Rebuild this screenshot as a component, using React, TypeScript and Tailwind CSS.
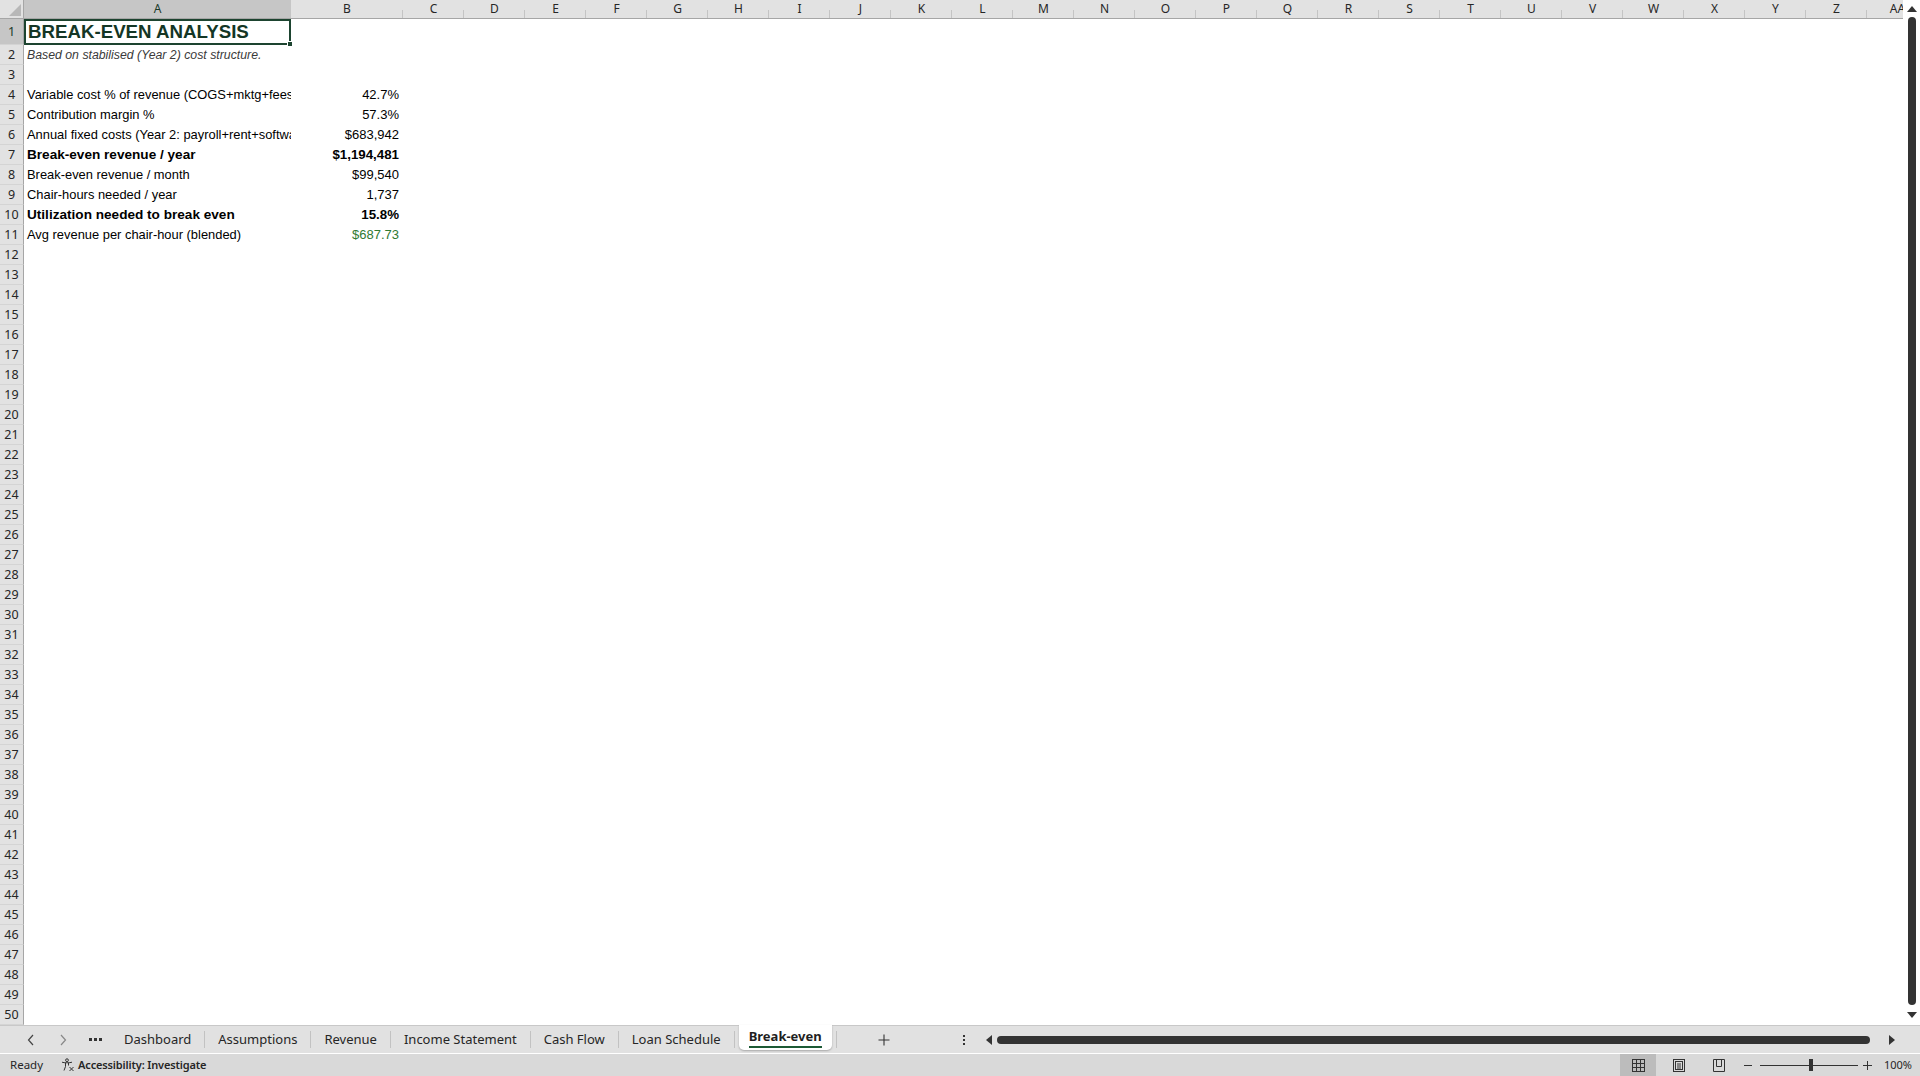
import React from "react";

// Sheet rows shown in the grid (column A label, column B value)
interface SheetRow {
  label: string;
  value?: string;
  bold?: boolean;
  green?: boolean;
}

const rows: Record<number, SheetRow> = {
  4: { label: "Variable cost % of revenue (COGS+mktg+fees)", value: "42.7%" },
  5: { label: "Contribution margin %", value: "57.3%" },
  6: { label: "Annual fixed costs (Year 2: payroll+rent+software)", value: "$683,942" },
  7: { label: "Break-even revenue / year", value: "$1,194,481", bold: true },
  8: { label: "Break-even revenue / month", value: "$99,540" },
  9: { label: "Chair-hours needed / year", value: "1,737" },
  10: { label: "Utilization needed to break even", value: "15.8%", bold: true },
  11: { label: "Avg revenue per chair-hour (blended)", value: "$687.73", green: true },
};

const extraCols = "CDEFGHIJKLMNOPQRSTUVWXYZ".split("").concat(["AA"]);
const tabs = ["Dashboard", "Assumptions", "Revenue", "Income Statement", "Cash Flow", "Loan Schedule"];

const ColHeader: React.FC<{ label: string; width: string; selected?: boolean }> = ({ label, width, selected }) => (
  <div
    className={`relative shrink-0 flex items-end justify-center pb-[3px] leading-none text-[12px] ${width} ${
      selected ? "bg-[#c6c6c6] text-[#1b3a29]" : "text-[#262626]"
    }`}
  >
    {label}
    <div className="absolute right-0 bottom-0 h-[8px] w-px bg-[#c4c4c4]" />
  </div>
);

const SheetGrid: React.FC = () => {
  const rowNumbers = Array.from({ length: 50 }, (_, i) => i + 1);
  return (
    <div className="flex-1 overflow-hidden bg-white">
      {/* column headers */}
      <div className="flex h-[19px] bg-[#e2e2e2] border-b border-[#a6a6a6] w-max">
        <div className="relative w-[24px] shrink-0 border-r border-[#a6a6a6]">
          <div className="absolute right-[2px] bottom-[2px] w-0 h-0 border-l-[12px] border-l-transparent border-b-[12px] border-b-[#b8b8b8]" />
        </div>
        <ColHeader label="A" width="w-[267px]" selected />
        <ColHeader label="B" width="w-[112px]" />
        {extraCols.map((c) => (
          <ColHeader key={c} label={c} width="w-[61px]" />
        ))}
      </div>

      {rowNumbers.map((n) => {
        const row = rows[n];
        const height = n === 1 ? "h-[26px]" : "h-[20px]";
        return (
          <div key={n} className={`flex ${height}`}>
            <div
              className={`w-[24px] shrink-0 flex items-center justify-center pt-[2px] leading-none text-[12.5px] border-r border-[#a6a6a6] border-b border-b-[#d4d4d4] ${
                n === 1 ? "bg-[#c6c6c6] text-[#1b3a29]" : "bg-[#e2e2e2] text-[#262626]"
              }`}
            >
              {n}
            </div>

            {n === 1 && (
              <div className="relative w-[267px] shrink-0 border-2 border-[#1d4430] flex items-center pl-[2px] pt-[1px] font-['Liberation_Sans',Arial,sans-serif] text-[18.7px] font-bold text-[#143625]">
                BREAK-EVEN ANALYSIS
                <div className="absolute -right-[4px] -bottom-[4px] w-[6px] h-[6px] bg-[#1d4430] border border-white" />
              </div>
            )}
            {n === 2 && (
              <div className="w-[267px] shrink-0 flex items-center pl-[3px] font-['Liberation_Sans',Arial,sans-serif] text-[12.3px] italic text-[#3a3a3a]">
                Based on stabilised (Year 2) cost structure.
              </div>
            )}
            {row && (
              <>
                <div
                  className={`w-[267px] shrink-0 overflow-hidden whitespace-nowrap flex items-center pl-[3px] font-['Liberation_Sans',Arial,sans-serif] text-black ${
                    row.bold ? "font-bold text-[13.6px]" : "text-[12.9px]"
                  }`}
                >
                  {row.label}
                </div>
                <div
                  className={`w-[112px] shrink-0 flex items-center justify-end pr-[4px] font-['Liberation_Sans',Arial,sans-serif] ${
                    row.bold ? "font-bold text-[13.3px]" : "text-[13px]"
                  } ${row.green ? "text-[#2f7a32]" : "text-black"}`}
                >
                  {row.value}
                </div>
              </>
            )}
          </div>
        );
      })}
    </div>
  );
};

const VerticalScroll: React.FC = () => (
  <div className="w-[17px] shrink-0 bg-white flex flex-col items-center">
    <div className="h-[17px] flex items-center justify-center">
      <div className="w-0 h-0 border-l-[5px] border-l-transparent border-r-[5px] border-r-transparent border-b-[6px] border-b-[#333]" />
    </div>
    <div className="flex-1 w-[8px] rounded-full bg-[#333]" />
    <div className="h-[20px] flex items-center justify-center">
      <div className="w-0 h-0 border-l-[5px] border-l-transparent border-r-[5px] border-r-transparent border-t-[6px] border-t-[#333]" />
    </div>
  </div>
);

const TabBar: React.FC = () => (
  <div className="flex items-stretch h-[28px] bg-[#e1e1e1] border-t border-[#c8c8c8] font-['Noto_Sans',sans-serif] text-[13px] text-[#262626]">
    <div className="w-[15px]" />
    <div className="w-[32px] flex items-center justify-center">
      <svg width="8" height="12" viewBox="0 0 8 12" fill="none" stroke="#444" strokeWidth="1.2">
        <path d="M6 1L1.5 6L6 11" />
      </svg>
    </div>
    <div className="w-[32px] flex items-center justify-center">
      <svg width="8" height="12" viewBox="0 0 8 12" fill="none" stroke="#888" strokeWidth="1.2">
        <path d="M2 1L6.5 6L2 11" />
      </svg>
    </div>
    <div className="w-[32px] flex items-center justify-center gap-[2px]">
      <span className="w-[3px] h-[3px] bg-[#333]" />
      <span className="w-[3px] h-[3px] bg-[#333]" />
      <span className="w-[3px] h-[3px] bg-[#333]" />
    </div>
    {tabs.map((t) => (
      <React.Fragment key={t}>
        <div className="flex items-center px-[13px] pt-[1px]">{t}</div>
        <div className="self-center w-px h-[17px] bg-[#c2c2c2]" />
      </React.Fragment>
    ))}
    <div className="mx-[4px] mb-[3px] -mt-px flex flex-col items-center justify-center px-[10px] bg-white rounded-b-[5px] shadow-[0_1px_2px_rgba(0,0,0,0.25)]">
      <span className="font-bold leading-[16px] text-[#1f1f1f]">Break-even</span>
      <span className="mt-[2px] w-full h-[2px] bg-[#1d5a35]" />
    </div>
    <div className="self-center w-px h-[17px] bg-[#c2c2c2]" />
    <div className="w-[94px] flex items-center justify-center">
      <svg width="12" height="12" viewBox="0 0 12 12" stroke="#333" strokeWidth="1.1">
        <path d="M6 0.5V11.5M0.5 6H11.5" />
      </svg>
    </div>
    <div className="ml-[27px] w-[12px] flex flex-col items-center justify-center gap-[2px]">
      <span className="w-[2px] h-[2px] bg-[#333]" />
      <span className="w-[2px] h-[2px] bg-[#333]" />
      <span className="w-[2px] h-[2px] bg-[#333]" />
    </div>
    <div className="ml-[16px] flex items-center">
      <div className="w-0 h-0 border-t-[5px] border-t-transparent border-b-[5px] border-b-transparent border-r-[6px] border-r-[#333]" />
    </div>
    <div className="ml-[5px] flex-1 flex items-center">
      <div className="w-full h-[8px] rounded-full bg-[#333]" />
    </div>
    <div className="ml-[19px] mr-[25px] flex items-center">
      <div className="w-0 h-0 border-t-[5px] border-t-transparent border-b-[5px] border-b-transparent border-l-[6px] border-l-[#333]" />
    </div>
  </div>
);

const AccessibilityIcon: React.FC = () => (
  <svg width="14" height="14" viewBox="0 0 14 14" fill="none" stroke="#333" strokeWidth="1">
    <circle cx="6" cy="2.2" r="1.4" />
    <path d="M1 4.2C3 5 9 5 11 4.2" />
    <path d="M4.5 5V8.5L3 12.5M7.5 5V7.5" />
    <path d="M8.5 9L12.5 13M12.5 9L8.5 13" />
  </svg>
);

const StatusBar: React.FC = () => (
  <div className="flex items-stretch h-[23px] bg-[#d9d9d9] border-t border-white font-['Noto_Sans',sans-serif] text-[11.5px] text-[#262626]">
    <div className="flex items-center pl-[10px]">Ready</div>
    <div className="flex items-center ml-[18px] gap-[3px]">
      <AccessibilityIcon />
      <span className="font-semibold text-[11px] tracking-[-0.15px]">Accessibility: Investigate</span>
    </div>
    <div className="ml-auto flex items-stretch">
      <div className="w-[36px] bg-[#bcbcbc] flex items-center justify-center">
        <svg width="13" height="13" viewBox="0 0 13 13" fill="none" stroke="#333" strokeWidth="1">
          <rect x="0.5" y="0.5" width="12" height="12" />
          <path d="M4.5 0.5V12.5M8.5 0.5V12.5M0.5 4.5H12.5M0.5 8.5H12.5" />
        </svg>
      </div>
      <div className="w-[46px] flex items-center justify-center">
        <svg width="12" height="13" viewBox="0 0 12 13" fill="none" stroke="#333" strokeWidth="1">
          <rect x="0.5" y="0.5" width="11" height="12" />
          <rect x="2.5" y="2.5" width="7" height="8" />
          <path d="M4 5H8M4 7H8M4 9H8" />
        </svg>
      </div>
      <div className="w-[34px] flex items-center justify-center">
        <svg width="12" height="13" viewBox="0 0 12 13" fill="none" stroke="#333" strokeWidth="1">
          <path d="M0.5 0.5H11.5V12.5H0.5Z" />
          <path d="M3.5 0.5V7.5H8.5V0.5" />
        </svg>
      </div>
      <div className="w-[24px] flex items-center justify-center">
        <span className="w-[8px] h-px bg-[#333]" />
      </div>
      <div className="relative w-[98px] flex items-center">
        <div className="w-full h-px bg-[#333]" />
        <div className="absolute left-[49px] top-[5px] w-[4px] h-[12px] bg-[#333]" />
      </div>
      <div className="w-[18px] flex items-center justify-center">
        <svg width="9" height="9" viewBox="0 0 9 9" stroke="#333" strokeWidth="1">
          <path d="M4.5 0V9M0 4.5H9" />
        </svg>
      </div>
      <div className="w-[44px] flex items-center justify-end pr-[8px] text-[11px]">100%</div>
    </div>
  </div>
);

export default function App() {
  return (
    <div className="w-[1920px] h-[1076px] flex flex-col overflow-hidden bg-white font-['Noto_Sans',sans-serif]">
      <div className="flex flex-1 overflow-hidden">
        <SheetGrid />
        <VerticalScroll />
      </div>
      <TabBar />
      <StatusBar />
    </div>
  );
}
